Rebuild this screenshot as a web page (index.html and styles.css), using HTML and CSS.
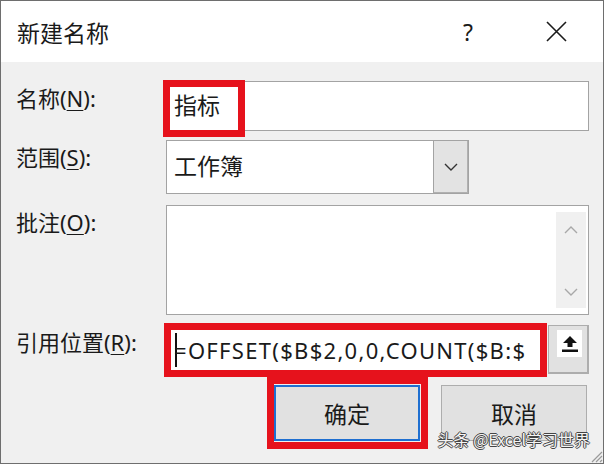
FILE: index.html
```html
<!DOCTYPE html>
<html>
<head>
<meta charset="utf-8">
<title>新建名称</title>
<link rel="stylesheet" href="styles.css">
</head>
<body>
<div class="dlg">
	<div class="titlebar">
		<span class="title">新建名称</span>
		<span class="help">?</span>
		<span class="close">
			<svg width="21" height="21" viewBox="0 0 21 21"><path d="M1 1L20 20M20 1L1 20" stroke="#1a1a1a" stroke-width="1.6" fill="none"/></svg>
		</span>
	</div>
	<div class="main">
		<div class="row">
			<label>名称(<u>N</u>):</label>
			<div class="box name">指标<i class="mark mark-name"></i></div>
		</div>
		<div class="row r-scope">
			<label>范围(<u>S</u>):</label>
			<div class="combo">
				<span class="combo-text">工作簿</span>
				<span class="drop"><svg width="14" height="8" viewBox="0 0 14 8"><path d="M1 1L7 7L13 1" stroke="#333" stroke-width="1.4" fill="none"/></svg></span>
			</div>
		</div>
		<div class="row r-note">
			<label>批注(<u>O</u>):</label>
			<div class="box note">
				<div class="vscroll">
					<svg width="14" height="8" viewBox="0 0 14 8"><path d="M1 7L7 1L13 7" stroke="#a8a8a8" stroke-width="1.4" fill="none"/></svg>
					<svg width="14" height="8" viewBox="0 0 14 8"><path d="M1 1L7 7L13 1" stroke="#a8a8a8" stroke-width="1.4" fill="none"/></svg>
				</div>
			</div>
		</div>
		<div class="row r-ref">
			<label>引用位置(<u>R</u>):</label>
			<div class="ref">
				<div class="box formula"><i class="caret"></i>=OFFSET($B$2,0,0,COUNT($B:$<i class="mark mark-formula"></i></div>
				<div class="pick">
					<span class="pick-face"><svg width="18" height="18" viewBox="0 0 18 18"><path d="M9 1L2 8H6.5V12H11.5V8H16Z" fill="#111"/><rect x="1" y="14.5" width="16" height="2.5" fill="#111"/></svg></span>
				</div>
			</div>
		</div>
		<div class="btns">
			<button class="btn ok">确定<i class="mark mark-ok"></i></button>
			<button class="btn">取消</button>
		</div>
	</div>
	<div class="wm">头条 @Excel学习世界</div>
	<svg class="grip" width="14" height="14" viewBox="0 0 14 14"><path d="M13 3L3 13M13 7L7 13M13 11L11 13" stroke="#9a9a9a" stroke-width="1.2"/></svg>
</div>
</body>
</html>
```

FILE: styles.css
```css
*{margin:0;padding:0;}
body{font-family:"Noto Sans","Noto Sans CJK SC",sans-serif;color:#1a1a1a;}
i{font-style:normal;}

.dlg{
	position:relative;
	width:604px;
	height:464px;
	box-sizing:border-box;
	border:1px solid #6e6e6e;
	background:#f0f0f0;
	overflow:hidden;
}
.titlebar{
	height:61px;
	background:#fff;
	display:flex;
	align-items:center;
	padding-left:16px;
}
.title{
	flex:1;
	font-size:23px;
}
.help{
	font-size:23px;
	margin-right:73px;
}
.close{
	display:flex;
	margin-right:36px;
}

.main{
	padding:19px 14px 0 15px;
}
.row{
	display:grid;
	grid-template-columns:150px 1fr;
}
.row label{
	font-size:22px;
	line-height:30px;
	padding-top:2px;
}
.row label u{
	text-decoration-thickness:1px;
	text-underline-offset:3px;
}
.box{
	position:relative;
	background:#fff;
	border:1px solid #a3a3a3;
	box-sizing:border-box;
}
.name{
	height:50px;
	font-size:23px;
	line-height:46px;
	padding-left:7px;
}

.r-scope{
	margin-top:9px;
}
.combo{
	display:flex;
	width:303px;
	height:54px;
	box-sizing:border-box;
	background:#fff;
	border:1px solid #a3a3a3;
}
.combo-text{
	flex:1;
	font-size:23px;
	line-height:50px;
	padding-left:7px;
}
.drop{
	width:33px;
	display:flex;
	align-items:center;
	justify-content:center;
	background:#e3e3e3;
	border-left:1px solid #a3a3a3;
	border-right:1px solid #b0b0b0;
	border-bottom:1px solid #b0b0b0;
}

.r-note{
	margin-top:11px;
}
.note{
	height:110px;
	display:flex;
	justify-content:flex-end;
	padding:6px 2px 6px 0;
}
.vscroll{
	width:30px;
	background:#f0f0f0;
	display:flex;
	flex-direction:column;
	align-items:center;
	justify-content:space-between;
	padding:14px 0 12px;
	box-sizing:border-box;
}

.r-ref{
	margin-top:10px;
}
.ref{
	display:flex;
	gap:2px;
}
.formula{
	flex:1;
	height:49px;
	font-size:22px;
	letter-spacing:1.3px;
	line-height:46px;
	padding-left:8px;
	white-space:nowrap;
	display:flex;
	align-items:center;
}
.caret{
	display:inline-block;
	width:2px;
	height:34px;
	background:#111;
	margin-right:-3px;
}
.pick{
	width:41px;
	height:49px;
	box-sizing:border-box;
	background:#e1e1e1;
	border:1px solid #adadad;
	border-width:1px 2px 2px 1px;
	padding:4px 0 0 8px;
}
.pick-face{
	display:flex;
	align-items:center;
	justify-content:center;
	width:25px;
	height:27px;
	background:#fff;
}

.btns{
	display:flex;
	justify-content:flex-end;
	gap:21px;
	margin-top:11px;
	padding-right:2px;
}
.btn{
	position:relative;
	width:146px;
	height:56px;
	font-family:"Noto Sans CJK SC",sans-serif;
	font-size:23px;
	color:#1a1a1a;
	background:#e1e1e1;
	border:1px solid #adadad;
}
.ok{
	border:2px solid #1f6fd0;
}

.mark{
	position:absolute;
	box-sizing:border-box;
	border:7px solid #e6121c;
}
.mark-name{
	left:-4px;
	top:-2px;
	width:82px;
	height:57px;
}
.mark-formula{
	left:-3px;
	top:-3px;
	width:383px;
	height:54px;
}
.mark-ok{
	left:-9px;
	top:-10px;
	width:161px;
	height:72px;
}

.wm{
	position:absolute;
	right:13px;
	bottom:12px;
	font-family:"Noto Sans CJK SC",sans-serif;
	font-size:16px;
	color:#f4f4f4;
	text-shadow:-1px 0 #444,1px 0 #444,0 -1px #444,0 1px #444;
}
.grip{
	position:absolute;
	right:0;
	bottom:0;
}
```
